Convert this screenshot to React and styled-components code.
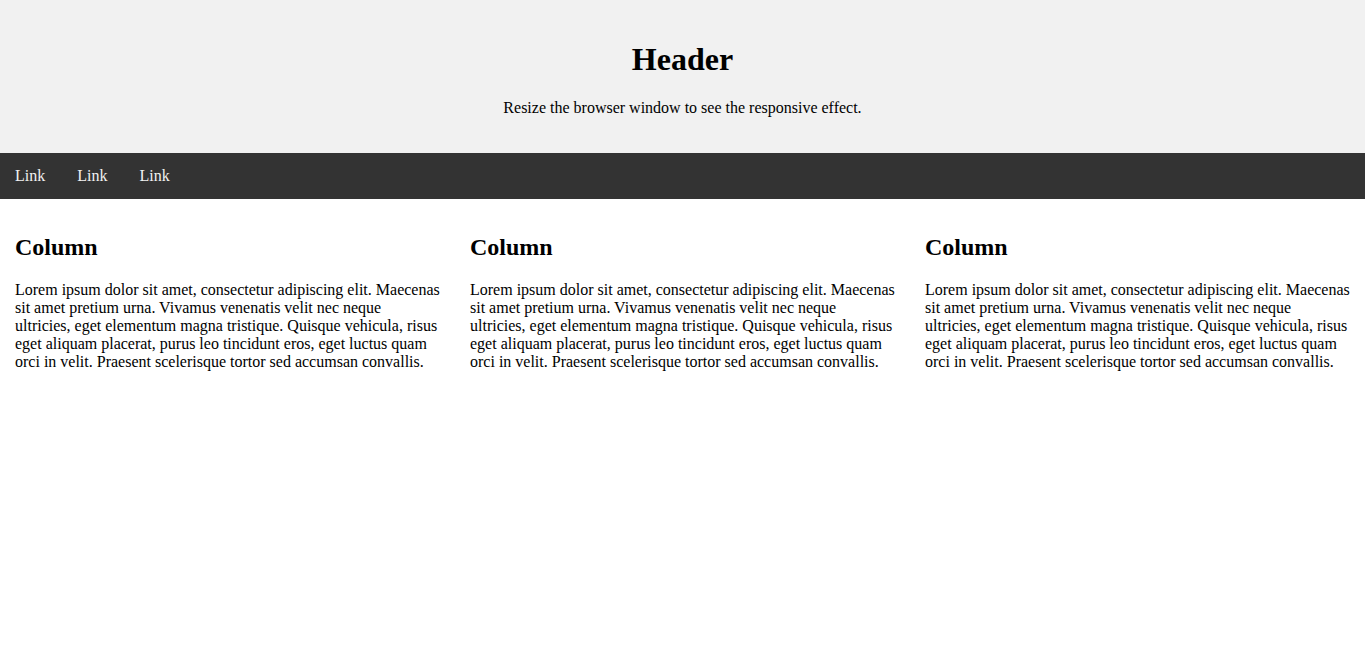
import React from 'react'
import styled, { createGlobalStyle } from 'styled-components';

const GlobalStyle = createGlobalStyle`
* {
  box-sizing: border-box;
}
body {
  margin: 0;
  font-family: "Liberation Serif", "Times New Roman", serif;
  color: #000;
  background: #fff;
}
`;

const Header = styled.div`
background-color: #f1f1f1;
padding: 20px;
text-align: center;
`;

const Title = styled.h1`
font-size: 2em;
font-weight: bold;
margin: 21px 0;
`;

const Subtitle = styled.p`
font-size: 16px;
margin: 16px 0;
`;

const TopNav = styled.nav`
display: flex;
background-color: #333;
`;

const NavLink = styled.a`
color: #f2f2f2;
text-decoration: none;
padding: 14px 16px 14px 15px;
margin-right: 1px;
font-size: 16px;
line-height: normal;
&:hover {
  background-color: #ddd;
  color: #000;
}
`;

const Row = styled.div`
display: flex;
`;

const Column = styled.div`
flex: 1 1 0;
padding: 15px;
`;

const ColumnTitle = styled.h2`
font-size: 1.5em;
font-weight: bold;
margin: 0.83em 0;
`;

const ColumnText = styled.p`
font-size: 16px;
margin: 1em 0;
`;

const lorem = 'Lorem ipsum dolor sit amet, consectetur adipiscing elit. Maecenas sit amet pretium urna. Vivamus venenatis velit nec neque ultricies, eget elementum magna tristique. Quisque vehicula, risus eget aliquam placerat, purus leo tincidunt eros, eget luctus quam orci in velit. Praesent scelerisque tortor sed accumsan convallis.';

const App = () => {
    return (
        <>
        <GlobalStyle />
        <Header>
            <Title>Header</Title>
            <Subtitle>Resize the browser window to see the responsive effect.</Subtitle>
        </Header>

        <TopNav>
            <NavLink href="#">Link</NavLink>
            <NavLink href="#">Link</NavLink>
            <NavLink href="#">Link</NavLink>
        </TopNav>

        <Row>
            {[0, 1, 2].map(i => (
                <Column key={i}>
                    <ColumnTitle>Column</ColumnTitle>
                    <ColumnText>{lorem}</ColumnText>
                </Column>
            ))}
        </Row>
        </>
    )
}

export default App
